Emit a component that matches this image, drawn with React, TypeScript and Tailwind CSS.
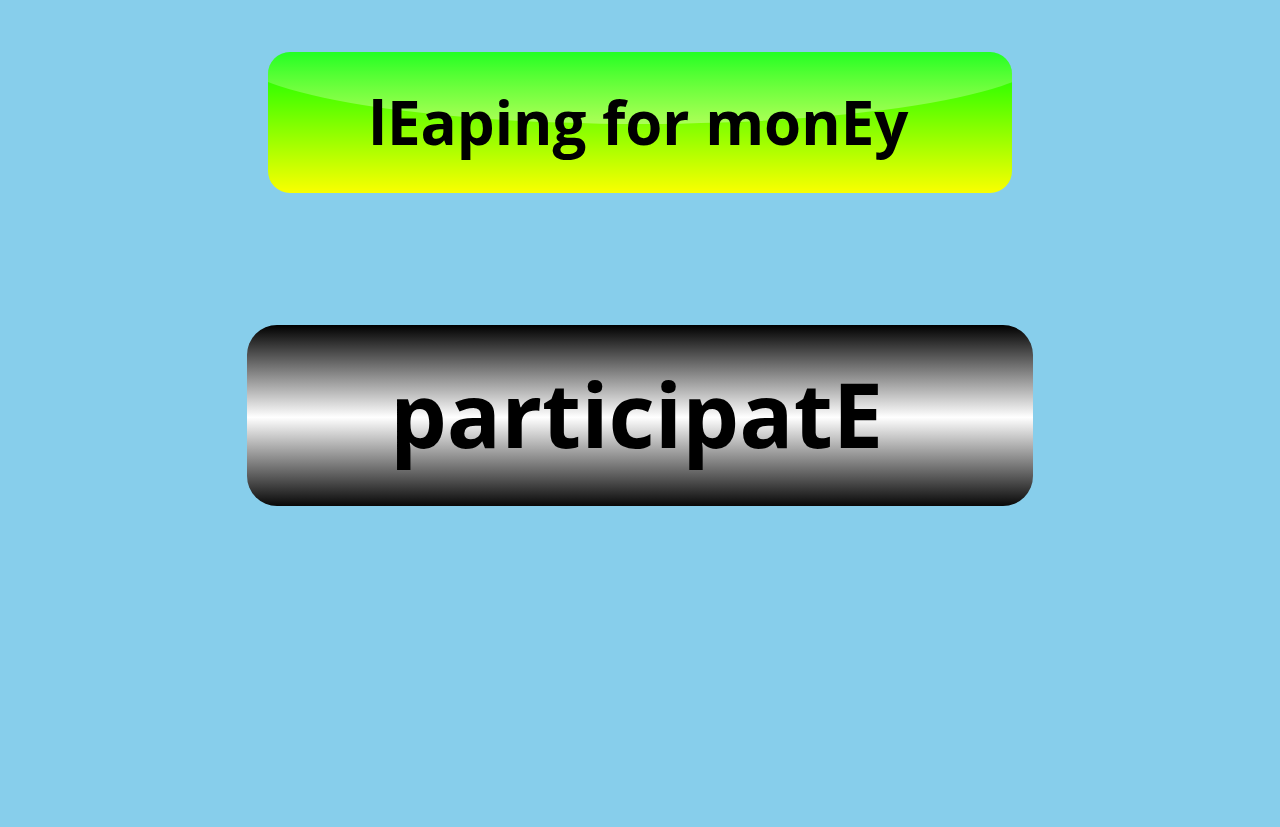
function Gloss() {
  return (
    <svg className="pointer-events-none absolute inset-0 h-full w-full" aria-hidden="true">
      <defs>
        <linearGradient id="gloss" x1="0" y1="0" x2="0" y2="1">
          <stop offset="50%" stopColor="#fff" stopOpacity="0.14" />
          <stop offset="100%" stopColor="#fff" stopOpacity="0.34" />
        </linearGradient>
      </defs>
      <ellipse cx="50%" cy="0" rx="55%" ry="72" fill="url(#gloss)" />
    </svg>
  );
}

export default function App() {
  return (
    <main className="flex min-h-screen flex-col items-center gap-[132px] bg-[#87ceeb] py-[52px] font-['Open_Sans',sans-serif] font-bold text-black">
      <button
        type="button"
        className="relative cursor-pointer overflow-hidden rounded-[22px] bg-linear-to-b/srgb from-[#00ff00] to-[#faff00] pr-[104px] pl-[101px] text-[60px] leading-[141px] whitespace-nowrap"
      >
        <Gloss />
        <span className="relative">lEaping for monEy</span>
      </button>

      <button
        type="button"
        className="cursor-pointer rounded-[30px] bg-linear-to-b/srgb from-black via-white via-51% to-[#080808] pr-[150px] pb-1 pl-[143px] text-[90px] leading-[177px] whitespace-nowrap"
      >
        participatE
      </button>
    </main>
  );
}
